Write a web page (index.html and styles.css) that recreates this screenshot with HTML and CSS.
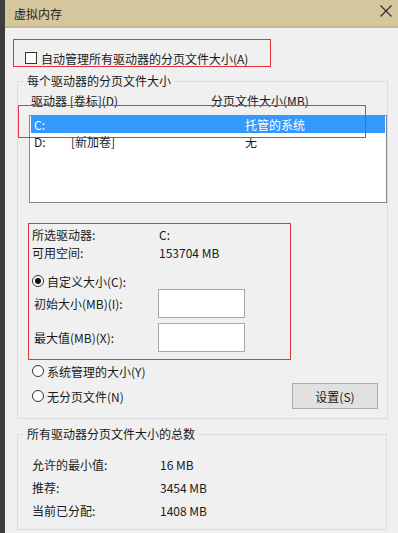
FILE: index.html
```html
<!DOCTYPE html>
<html lang="zh-CN">
<head>
    <meta charset="UTF-8">
    <title>虚拟内存</title>
    <link rel="stylesheet" href="styles.css">
</head>
<body>

<div class="window">
    <div class="edge"></div>
    <div class="main">
        <div class="titlebar">
            <span class="title">虚拟内存</span>
            <svg class="close" width="12" height="12" viewBox="0 0 12 12">
                <path d="M0.5 0.5 L11.5 11.5 M11.5 0.5 L0.5 11.5" stroke="#2b2b2b" stroke-width="1.1" fill="none"/>
            </svg>
        </div>

        <div class="content">
            <div class="auto-row">
                <span class="checkbox"></span>
                <span>自动管理所有驱动器的分页文件大小(A)</span>
            </div>

            <fieldset class="group">
                <legend>每个驱动器的分页文件大小</legend>
                <div class="list-head">
                    <span class="head-drive">驱动器 [卷标](D)</span>
                    <span>分页文件大小(MB)</span>
                </div>
                <div class="drive-list">
                    <div class="drive-row selected">
                        <span class="col-letter">C:</span>
                        <span class="col-label"></span>
                        <span>托管的系统</span>
                    </div>
                    <div class="drive-row">
                        <span class="col-letter">D:</span>
                        <span class="col-label">[新加卷]</span>
                        <span>无</span>
                    </div>
                </div>

                <div class="info-row first">
                    <span class="info-label">所选驱动器:</span>
                    <span>C:</span>
                </div>
                <div class="info-row">
                    <span class="info-label">可用空间:</span>
                    <span>153704 MB</span>
                </div>

                <div class="radio-row custom">
                    <span class="radio checked"></span>
                    <span>自定义大小(C):</span>
                </div>
                <div class="size-row">
                    <span class="size-label">初始大小(MB)(I):</span>
                    <span class="size-box"></span>
                </div>
                <div class="size-row second">
                    <span class="size-label">最大值(MB)(X):</span>
                    <span class="size-box"></span>
                </div>
                <div class="radio-row system">
                    <span class="radio"></span>
                    <span>系统管理的大小(Y)</span>
                </div>
                <div class="last-row">
                    <div class="radio-row">
                        <span class="radio"></span>
                        <span>无分页文件(N)</span>
                    </div>
                    <button type="button" class="set-btn">设置(S)</button>
                </div>
            </fieldset>

            <fieldset class="group totals">
                <legend>所有驱动器分页文件大小的总数</legend>
                <div class="total-row first">
                    <span class="total-label">允许的最小值:</span>
                    <span>16 MB</span>
                </div>
                <div class="total-row">
                    <span class="total-label">推荐:</span>
                    <span>3454 MB</span>
                </div>
                <div class="total-row">
                    <span class="total-label">当前已分配:</span>
                    <span>1408 MB</span>
                </div>
            </fieldset>
        </div>
    </div>

    <div class="mark mark-auto"></div>
    <div class="mark mark-drive"></div>
    <div class="mark mark-size"></div>
</div>

</body>
</html>
```

FILE: styles.css
```css
body {
    margin: 0;
    font-family: "Noto Sans CJK SC", "Noto Sans", sans-serif;
    font-size: 12px;
    color: #1a1a1a;
}
.window {
    position: relative;
    display: flex;
    width: 398px;
    height: 533px;
    overflow: hidden;
    background: #f0f0f0;
}
.edge {
    width: 5px;
    background: #3e3e3e;
}
.main {
    flex: 1;
}
.titlebar {
    display: flex;
    align-items: center;
    justify-content: space-between;
    height: 26px;
    padding: 0 6px 0 9px;
    background: #d6c69d;
    border-bottom: 2px solid #cbb98e;
}
.title {
    font-size: 12px;
    color: #222;
    margin-top: 1px;
}
.close {
    margin-top: -5px;
}
.content {
    padding-top: 22px;
}
.auto-row {
    display: flex;
    align-items: center;
    gap: 4px;
    height: 16px;
    padding-left: 20px;
}
.checkbox {
    width: 10px;
    height: 10px;
    border: 1px solid #333;
    background: #fff;
}
.group {
    box-sizing: border-box;
    width: 370px;
    margin: 7px 0 0 12px;
    padding: 0 0 9px;
    border: 1px solid #dcdcdc;
}
.group legend {
    margin-left: 6px;
    padding: 0 3px;
    line-height: 16px;
}
.list-head {
    display: flex;
    margin-top: 4px;
    padding-left: 13px;
    line-height: 16px;
}
.head-drive {
    width: 180px;
}
.drive-list {
    box-sizing: border-box;
    width: 358px;
    height: 88px;
    margin: 6px 0 0 11px;
    padding: 0 1px;
    border: 1px solid #828790;
    background: #fff;
}
.drive-row {
    display: flex;
    height: 17px;
    line-height: 17px;
    padding-left: 3px;
}
.drive-row.selected {
    background: #3399ff;
    color: #fff;
}
.col-letter {
    width: 37px;
}
.col-label {
    width: 174px;
}
.info-row {
    display: flex;
    padding-left: 14px;
    line-height: 18px;
}
.info-row.first {
    margin-top: 23px;
}
.info-label {
    width: 127px;
}
.radio-row {
    display: flex;
    align-items: center;
    gap: 3px;
    height: 16px;
    padding-left: 14px;
}
.radio-row.custom {
    margin-top: 11px;
}
.radio-row.system {
    margin-top: 11px;
}
.radio {
    box-sizing: border-box;
    display: flex;
    align-items: center;
    justify-content: center;
    width: 12px;
    height: 12px;
    border: 1px solid #333;
    border-radius: 50%;
    background: #fff;
}
.radio.checked::after {
    content: "";
    width: 6px;
    height: 6px;
    border-radius: 50%;
    background: #111;
}
.size-row {
    display: flex;
    align-items: center;
    padding-left: 16px;
}
.size-row.second {
    margin-top: 5px;
}
.size-label {
    width: 124px;
}
.size-box {
    box-sizing: border-box;
    width: 87px;
    height: 29px;
    border: 1px solid #a8a8a8;
    background: #fff;
}
.last-row {
    display: flex;
    align-items: center;
    justify-content: space-between;
    margin-top: 4px;
    padding-right: 9px;
}
.set-btn {
    box-sizing: border-box;
    width: 86px;
    height: 26px;
    border: 1px solid #adadad;
    background: #e1e1e1;
    font-family: inherit;
    font-size: 12px;
    color: #1a1a1a;
    padding: 0;
}
.totals {
    margin-top: 7px;
    padding-bottom: 7px;
}
.total-row {
    display: flex;
    padding-left: 14px;
    line-height: 23px;
}
.total-row.first {
    margin-top: 11px;
}
.total-label {
    width: 128px;
}

/* red annotation frames drawn over the dialog */
.mark {
    position: absolute;
    border: 1px solid #e4323e;
}
.mark-auto {
    left: 13px;
    top: 39px;
    width: 256px;
    height: 26px;
}
.mark-drive {
    left: 18px;
    top: 105px;
    width: 346px;
    height: 31px;
}
.mark-size {
    left: 28px;
    top: 223px;
    width: 261px;
    height: 135px;
}
```
